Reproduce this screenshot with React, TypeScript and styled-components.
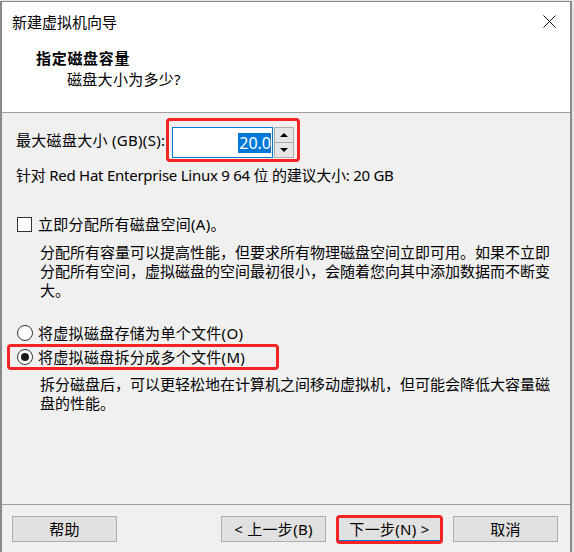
import React from "react";
import styled, { createGlobalStyle } from "styled-components";

const Global = createGlobalStyle`
  html, body { margin: 0; padding: 0; background: #e4e4e4; }
  body {
    font-family: "Noto Sans", "Noto Sans CJK SC", sans-serif;
    font-size: 15px;
    color: #000;
  }
  * { box-sizing: border-box; }
`;

const Window = styled.div`
  width: 572px;
  height: 551px;
  margin-top: 1px;
  border: 1px solid #8a8a8a;
  border-left-width: 2px;
  border-right-width: 2px;
  border-bottom: none;
  background: #f0f0f0;
  display: flex;
  flex-direction: column;
  overflow: hidden;
`;

const TitleBar = styled.div`
  height: 39px;
  background: #fff;
  display: flex;
  align-items: center;
  justify-content: space-between;
  padding: 0 14px 0 10px;
  font-size: 15px;
  line-height: 20px;
`;

const CloseIcon = styled.svg`
  width: 13px;
  height: 13px;
  display: block;
`;

const Header = styled.div`
  height: 72px;
  background: #fff;
  border-bottom: 1px solid #a0a0a0;
  padding: 7px 0 0 34px;
`;

const Heading = styled.div`
  font-weight: 700;
  font-size: 15px;
  line-height: 20px;
  letter-spacing: 0.7px;
`;

const SubHeading = styled.div`
  margin: 1px 0 0 31px;
  line-height: 20px;
  letter-spacing: 0.3px;
`;

const Body = styled.div`
  flex: 1;
  padding: 5px 0 0 14px;
  display: flex;
  flex-direction: column;
  align-items: flex-start;
`;

const SizeRow = styled.div`
  display: flex;
  align-items: center;
  height: 44px;
`;

const Label = styled.span`
  line-height: 20px;
  letter-spacing: 0.3px;
  width: 150px;
  white-space: nowrap;
`;

const Highlight = styled.div`
  width: 134px;
  height: 44px;
  border: 3px solid #f42424;
  border-radius: 4px;
  padding: 6px 0 0 3px;
  display: flex;
  align-items: flex-start;
`;

const SpinInput = styled.div`
  width: 101px;
  height: 31px;
  background: #fff;
  border: 1px solid #0078d7;
  display: flex;
  align-items: center;
  justify-content: flex-end;
  padding-right: 1px;
`;

const Selected = styled.span`
  background: #0078d7;
  color: #fff;
  font-size: 16px;
  line-height: 20px;
  padding: 0 0 0 1px;
  font-family: "Noto Sans", sans-serif;
`;

const SpinButtons = styled.div`
  display: flex;
  flex-direction: column;
  width: 20px;
  height: 31px;
  margin-left: 1px;
`;

const SpinButton = styled.div`
  flex: 1;
  background: #e5e5e5;
  border: 1px solid #adadad;
  display: flex;
  align-items: center;
  justify-content: center;
  & + & { border-top: none; }
`;

const Arrow = styled.span<{ $dir: "up" | "down" }>`
  width: 0;
  height: 0;
  border-left: 4px solid transparent;
  border-right: 4px solid transparent;
  ${(p) =>
    p.$dir === "up"
      ? "border-bottom: 4px solid #000;"
      : "border-top: 4px solid #000;"}
`;

const Text = styled.div<{ $mt: number }>`
  margin-top: ${(p) => p.$mt}px;
  line-height: 20px;
  white-space: nowrap;
  letter-spacing: -0.25px;
`;

const OptionRow = styled.div<{ $mt: number }>`
  position: relative;
  margin-top: ${(p) => p.$mt}px;
  display: flex;
  align-items: center;
  height: 20px;
  line-height: 20px;
  white-space: nowrap;
  letter-spacing: 0.3px;
`;

const CheckBox = styled.span`
  width: 15px;
  height: 15px;
  border: 1px solid #333;
  background: #fff;
  margin: 0 6px 0 1px;
`;

const Radio = styled.span<{ $checked?: boolean }>`
  width: 16px;
  height: 16px;
  border-radius: 50%;
  border: 1px solid #333;
  background: #fff;
  margin: 0 5px 0 1px;
  display: flex;
  align-items: center;
  justify-content: center;
  &::after {
    content: "";
    width: 8px;
    height: 8px;
    border-radius: 50%;
    background: ${(p) => (p.$checked ? "#1a1a1a" : "transparent")};
  }
`;

const RedMark = styled.span<{ $w: number }>`
  position: absolute;
  left: -9px;
  top: -3px;
  width: ${(p) => p.$w}px;
  height: 26px;
  border: 3px solid #f42424;
  border-radius: 4px;
  pointer-events: none;
`;

const Desc = styled.div<{ $mt: number }>`
  margin: ${(p) => p.$mt}px 0 0 24px;
  line-height: 19px;
  letter-spacing: 0px;
`;

const Line = styled.div`
  white-space: nowrap;
`;

const Footer = styled.div`
  height: 48px;
  border-top: 1px solid #a0a0a0;
  padding: 11px 12px 0 10px;
  display: flex;
  align-items: flex-start;
  gap: 11px;
`;

const Button = styled.div<{ $default?: boolean }>`
  position: relative;
  width: 105px;
  height: 26px;
  background: #e1e1e1;
  border: ${(p) => (p.$default ? "2px solid #0078d7" : "1px solid #adadad")};
  display: flex;
  align-items: center;
  justify-content: center;
  line-height: 20px;
  letter-spacing: 0.3px;
`;

const Spacer = styled.div`
  flex: 1;
`;

const ButtonMark = styled.span`
  position: absolute;
  left: -3px;
  right: -3px;
  top: -3px;
  bottom: -4px;
  border: 3px solid #f42424;
  border-radius: 4px;
`;

export default function App() {
  return (
    <>
      <Global />
      <Window>
        <TitleBar>
          <span>新建虚拟机向导</span>
          <CloseIcon viewBox="0 0 13 13">
            <path d="M0.5 0.5 L12.5 12.5 M12.5 0.5 L0.5 12.5" stroke="#111" strokeWidth="1" fill="none" />
          </CloseIcon>
        </TitleBar>
        <Header>
          <Heading>指定磁盘容量</Heading>
          <SubHeading>磁盘大小为多少?</SubHeading>
        </Header>
        <Body>
          <SizeRow>
            <Label>最大磁盘大小 (GB)(S):</Label>
            <Highlight>
              <SpinInput>
                <Selected>20.0</Selected>
              </SpinInput>
              <SpinButtons>
                <SpinButton>
                  <Arrow $dir="up" />
                </SpinButton>
                <SpinButton>
                  <Arrow $dir="down" />
                </SpinButton>
              </SpinButtons>
            </Highlight>
          </SizeRow>
          <Text $mt={3}>针对 Red Hat Enterprise Linux 9 64 位 的建议大小: 20 GB</Text>
          <OptionRow $mt={29}>
            <CheckBox />
            立即分配所有磁盘空间(A)。
          </OptionRow>
          <Desc $mt={9}>
            <Line>分配所有容量可以提高性能，但要求所有物理磁盘空间立即可用。如果不立即</Line>
            <Line>分配所有空间，虚拟磁盘的空间最初很小，会随着您向其中添加数据而不断变</Line>
            <Line>大。</Line>
          </Desc>
          <OptionRow $mt={23}>
            <Radio />
            将虚拟磁盘存储为单个文件(O)
          </OptionRow>
          <OptionRow $mt={4}>
            <RedMark $w={272} />
            <Radio $checked />
            将虚拟磁盘拆分成多个文件(M)
          </OptionRow>
          <Desc $mt={8}>
            <Line>拆分磁盘后，可以更轻松地在计算机之间移动虚拟机，但可能会降低大容量磁</Line>
            <Line>盘的性能。</Line>
          </Desc>
        </Body>
        <Footer>
          <Button>帮助</Button>
          <Spacer />
          <Button>&lt; 上一步(B)</Button>
          <Button $default>
            <ButtonMark />
            下一步(N) &gt;
          </Button>
          <Button>取消</Button>
        </Footer>
      </Window>
    </>
  );
}
